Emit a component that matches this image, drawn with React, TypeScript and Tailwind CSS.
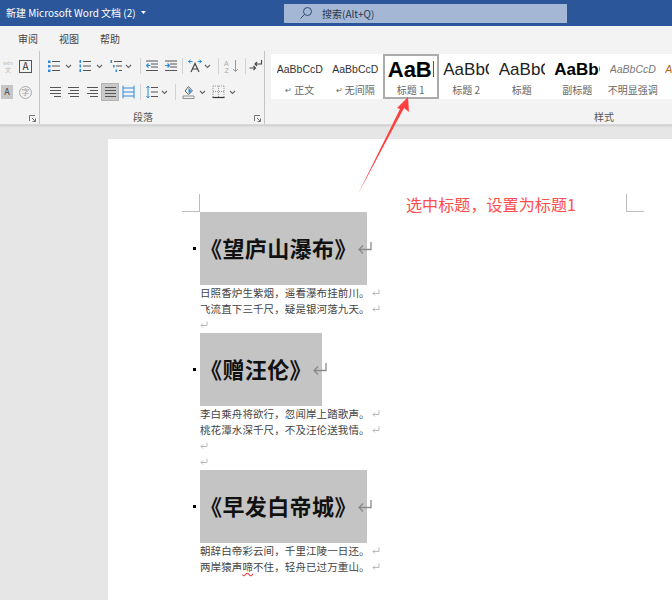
import type { ReactNode } from "react";

const FONT = { fontFamily: '"Noto Sans CJK SC", "Liberation Sans", sans-serif' };

const BLUE = "#2e8bdc";
const INK = "#555";

function Glyph({ w = 14, className = "", children }: { w?: number; className?: string; children: ReactNode }) {
  return (
    <svg width={w} height={14} viewBox={`0 0 ${w} 14`} fill="none" className={`shrink-0 ${className}`} aria-hidden={true}>
      {children}
    </svg>
  );
}

function Chevron({ className = "" }: { className?: string }) {
  return (
    <svg width={7} height={5} viewBox="0 0 7 5" fill="none" className={`shrink-0 ${className}`} aria-hidden={true}>
      <path d="M1 1l2.5 2.5L6 1" stroke="#666" strokeWidth="1.1" />
    </svg>
  );
}

function Sep({ className = "" }: { className?: string }) {
  return <div className={`h-[16px] w-px shrink-0 bg-[#d2d2d2] ${className}`} />;
}

function Launcher({ className = "" }: { className?: string }) {
  return (
    <svg width={7} height={7} viewBox="0 0 7 7" fill="none" className={`shrink-0 ${className}`} aria-hidden={true}>
      <path d="M0.5 6V0.5H6M3 3l3.5 3.5M6.5 3.5v3h-3" stroke="#666" strokeWidth="0.9" />
    </svg>
  );
}

function Lines({ rows, x1 = 1, x2 = 12 }: { rows: [number, number][]; x1?: number; x2?: number }) {
  return (
    <Glyph w={13}>
      {rows.map(([y, inset], i) => (
        <path key={i} d={`M${x1 + inset} ${y}H${x2}`} stroke={INK} strokeWidth="1" />
      ))}
    </Glyph>
  );
}

function Bullets() {
  return (
    <Glyph w={12}>
      {[2.5, 7, 11.5].map((y) => (
        <g key={y}>
          <rect x="0" y={y - 1} width="2.5" height="2.5" fill={BLUE} />
          <path d={`M4 ${y}H12`} stroke={INK} />
        </g>
      ))}
    </Glyph>
  );
}

function Numbered() {
  return (
    <Glyph w={12}>
      {[2.5, 7, 11.5].map((y) => (
        <g key={y}>
          <rect x="0.5" y={y - 1.5} width="1.6" height="3" fill={BLUE} />
          <path d={`M4 ${y}H12`} stroke={INK} />
        </g>
      ))}
    </Glyph>
  );
}

function Multilevel() {
  return (
    <Glyph w={12}>
      <rect x="0.5" y="1" width="1.6" height="3" fill={BLUE} />
      <path d="M4 2.5H12" stroke={INK} />
      <rect x="3" y="6" width="1.6" height="2.5" fill={BLUE} />
      <path d="M6 7H12" stroke={INK} />
      <rect x="5.5" y="10.5" width="1.6" height="2.5" fill={BLUE} />
      <path d="M9 11.5H12" stroke={INK} />
    </Glyph>
  );
}

function Indent({ flip = false }: { flip?: boolean }) {
  return (
    <Glyph w={12}>
      <path d="M0 2H12M5 5H12M5 8H12M0 11.5H12" stroke={INK} />
      <path d={flip ? "M0 6.5H4M2.5 4.5L4.5 6.5L2.5 8.5" : "M0.5 6.5H4.5M2.5 4.5L0.5 6.5L2.5 8.5"} stroke={BLUE} strokeWidth="1.2" />
    </Glyph>
  );
}

function RibbonButtons() {
  return (
    <div className="flex h-[73px] w-[225px] shrink-0 flex-col border-r border-[#c4c4c4]">
      <div className="mt-[8px] flex h-[14px] items-center">
        <div className="ml-[8px]"><Bullets /></div>
        <Chevron className="ml-[5px]" />
        <div className="ml-[7px]"><Numbered /></div>
        <Chevron className="ml-[5px]" />
        <div className="ml-[7px]"><Multilevel /></div>
        <Chevron className="ml-[3px]" />
        <Sep className="ml-[8px]" />
        <div className="ml-[5px]"><Indent /></div>
        <div className="ml-[7px]"><Indent flip={true} /></div>
        <Sep className="ml-[5px]" />
        <Glyph w={14} className="ml-[5px]">
          <path d="M3 13L7 4.5L11 13M4.5 10H9.5" stroke="#444" strokeWidth="1.2" />
          <path d="M0.5 2.5H4.5M2.5 0.8L0.5 2.5L2.5 4.2M13.5 2.5H9.5M11.5 0.8L13.5 2.5L11.5 4.2" stroke={BLUE} />
        </Glyph>
        <Chevron className="ml-[2px]" />
        <Sep className="ml-[7px]" />
        <Glyph w={16} className="ml-[5px]">
          <text x="0" y="6.5" fontSize="7" fill="#aaa" fontFamily="Liberation Sans">A</text>
          <text x="0.5" y="13.5" fontSize="7" fill="#aaa" fontFamily="Liberation Sans">Z</text>
          <path d="M11.5 1V12.5M9 10L11.5 12.5L14 10" stroke="#999" />
        </Glyph>
        <Sep className="ml-[5px]" />
        <Glyph w={14} className="ml-[3px]">
          <path d="M12.5 1V5H6M8 3L6 5L8 7" stroke="#444" strokeWidth="1.1" />
          <path d="M0.5 9H6.5M4.5 7L6.5 9L4.5 11" stroke="#444" strokeWidth="1.1" />
        </Glyph>
      </div>
      <div className="mt-[10px] flex h-[18px] items-center">
        <div className="ml-[9px]"><Lines rows={[[2.5, 0], [5.5, 0], [8.5, 0], [11.5, 4]]} /></div>
        <div className="ml-[5px]"><Lines rows={[[2.5, 0], [5.5, 2], [8.5, 0], [11.5, 2]]} /></div>
        <div className="ml-[6px]"><Lines rows={[[2.5, 0], [5.5, 3], [8.5, 0], [11.5, 3]]} /></div>
        <div className="ml-[2px] flex h-[18px] w-[18px] items-center justify-center border border-[#b4b4b4] bg-[#c9c9c9]">
          <Lines rows={[[2.5, 0], [5.5, 0], [8.5, 0], [11.5, 0]]} />
        </div>
        <Glyph w={13} className="ml-[3px]">
          <path d="M1 0.5V13.5M12 0.5V13.5" stroke={BLUE} />
          <path d="M1 3H12M1 7H12M1 11H12" stroke={BLUE} />
        </Glyph>
        <Sep className="ml-[5px]" />
        <Glyph w={12} className="ml-[5px]">
          <path d="M5 2.5H12M5 7H12M5 11.5H12" stroke={INK} />
          <path d="M2 1V13" stroke={BLUE} />
          <path d="M0.5 3L2 1L3.5 3M0.5 11L2 13L3.5 11" stroke={BLUE} />
        </Glyph>
        <Chevron className="ml-[3px]" />
        <Sep className="ml-[7px]" />
        <Glyph w={13} className="ml-[6px]">
          <path d="M6.5 1.5L10.5 6L6.5 9.5L3 6Z" stroke="#666" />
          <path d="M6.5 3L9.5 6L6.5 8.5Z" fill={BLUE} />
          <path d="M1 11H12V13.5H1Z" fill="#f5f5f5" stroke="#777" strokeWidth="0.8" />
        </Glyph>
        <Chevron className="ml-[4px]" />
        <Glyph w={13} className="ml-[6px]">
          <path d="M1 1H12M1 6.5H12M1 1V12M6.5 1V12M12 1V12" stroke="#999" strokeDasharray="1 1" />
          <path d="M0.5 12.5H12.5" stroke="#333" strokeWidth="1.2" />
        </Glyph>
        <Chevron className="ml-[4px]" />
      </div>
      <div className="relative mt-[7px] flex h-[16px] items-center justify-center text-[10px] text-[#555]">
        <span className="mr-[18px]">段落</span>
        <Launcher className="absolute right-[3px] top-[7px]" />
      </div>
    </div>
  );
}

const STYLES = [
  { sample: "AaBbCcDd", label: "正文", mark: true, cls: "text-[10.5px] text-[#333]" },
  { sample: "AaBbCcDd", label: "无间隔", mark: true, cls: "text-[10.5px] text-[#333]" },
  { sample: "AaBbC", label: "标题 1", cls: "text-[22px] font-bold text-black", on: true },
  { sample: "AaBbC", label: "标题 2", cls: "text-[17px] text-[#222]" },
  { sample: "AaBbC", label: "标题", cls: "text-[17px] text-[#222]" },
  { sample: "AaBbC", label: "副标题", cls: "text-[17px] font-bold text-black" },
  { sample: "AaBbCcDd", label: "不明显强调", cls: "text-[10.5px] italic text-[#777]" },
  { sample: "AaBb", label: "", cls: "text-[10.5px] italic text-[#b5651d]" },
];

function Gallery() {
  return (
    <div className="ml-[6px] flex h-[73px] min-w-0 flex-1 flex-col">
      <div className="mt-[3px] flex h-[45px] bg-white pl-[1px]">
        {STYLES.map((s, i) => (
          <div
            key={i}
            className={`flex h-[45px] w-[55.5px] shrink-0 flex-col items-center overflow-hidden ${s.on ? "border-2 border-[#ababab]" : "border-2 border-transparent"}`}
          >
            <div className="flex h-[27px] w-[46px] items-center overflow-hidden whitespace-nowrap leading-none" style={{ fontFamily: '"Liberation Sans", sans-serif' }}>
              <span className={s.cls}>{s.sample}</span>
            </div>
            <div className="flex h-[13px] items-center whitespace-nowrap text-[10px] text-[#666]">
              {s.mark && <span className="mr-[2px] text-[8px]">↵</span>}
              {s.label}
            </div>
          </div>
        ))}
      </div>
      <div className="mt-[10px] pl-[323px] text-[10px] leading-[16px] text-[#555]">样式</div>
    </div>
  );
}

function ParaMark({ className = "" }: { className?: string }) {
  return (
    <svg width={8} height={8} viewBox="0 0 8 8" fill="none" className={`shrink-0 ${className}`} aria-hidden={true}>
      <path d="M7 0.5V4.5H1M3 2.5L1 4.5L3 6.5" stroke="#aaa" strokeWidth="0.8" />
    </svg>
  );
}

function Heading({ text, width }: { text: string; width: string }) {
  return (
    <div className="relative flex h-[73px] items-center">
      <span className="absolute left-[-7px] top-[35px] h-[3px] w-[3px] bg-black" />
      <div className={`flex h-[73px] items-center whitespace-nowrap bg-[#c4c4c4] pb-[3px] text-[22px] font-bold tracking-[0.4px] text-[#111] ${width}`}>
        {text}
      </div>
      <svg width={14} height={14} viewBox="0 0 14 14" fill="none" className="ml-[-9px] mt-[-2px] shrink-0" aria-hidden={true}>
        <path d="M13 1V8.5H1M5 4.5L1 8.5L5 12.5" stroke="#8a8a8a" strokeWidth="1.3" />
      </svg>
    </div>
  );
}

function Line({ children }: { children?: ReactNode }) {
  return (
    <div className="flex h-[16px] items-center whitespace-nowrap text-[10.5px] tracking-[0.1px] text-[#444]">
      {children}
      <ParaMark className={children ? "ml-[2px]" : ""} />
    </div>
  );
}

export default function App() {
  return (
    <div className="relative h-[600px] w-[672px] overflow-hidden bg-[#e6e6e6]" style={FONT}>
      {/* title bar */}
      <div className="flex h-[26px] items-center bg-[#2b579a] text-white">
        <div className="ml-[6px] flex w-[278px] items-center pb-[1px] text-[10px]">
          <span>新建 Microsoft Word 文档 (2)</span>
          <svg width={5} height={3} viewBox="0 0 5 3" className="ml-[5px]" aria-hidden={true}>
            <path d="M0 0h5L2.5 3z" fill="#fff" />
          </svg>
        </div>
        <div className="flex h-[19px] w-[283px] items-center bg-[#a4b8d5] text-[#333]">
          <svg width={14} height={14} viewBox="0 0 14 14" fill="none" className="ml-[15px]" aria-hidden={true}>
            <circle cx="8.5" cy="5.5" r="4" stroke="#2f4a73" />
            <path d="M5.5 8.5L1.5 12.5" stroke="#2f4a73" />
          </svg>
          <span className="ml-[9px] text-[10px] text-[#26364f]">搜索(Alt+Q)</span>
        </div>
      </div>

      {/* tabs */}
      <div className="flex h-[25px] items-center gap-[21px] bg-[#f3f3f3] pl-[18px] text-[10px] text-[#444]">
        <span>审阅</span>
        <span>视图</span>
        <span>帮助</span>
      </div>

      {/* ribbon */}
      <div className="flex h-[74px] items-start border-b border-[#d9d9d9] bg-[#f3f3f3] shadow-[0_1px_2px_rgba(0,0,0,0.12)]">
        <div className="flex h-[73px] w-[40px] shrink-0 flex-col border-r border-[#c4c4c4]">
          <div className="mt-[8px] flex h-[14px] items-center">
            <div className="ml-[1px] flex w-[14px] flex-col items-center text-[5px] leading-[7px] text-[#bbb]">
              <span>wén</span>
              <span className="text-[6px]">文</span>
            </div>
            <div className="ml-[4px] flex h-[13px] w-[13px] items-center justify-center border border-[#555] text-[10px] leading-none text-[#333]">A</div>
          </div>
          <div className="mt-[10px] flex h-[18px] items-center">
            <div className="ml-[1px] flex h-[14px] w-[12px] items-center justify-center bg-[#c6c6c6] text-[9px] text-[#444]">A</div>
            <div className="ml-[6px] flex h-[13px] w-[13px] items-center justify-center rounded-full border border-[#aaa] text-[8px] leading-none text-[#999]">字</div>
          </div>
          <div className="mt-[14px] flex justify-end pr-[3px]">
            <Launcher />
          </div>
        </div>
        <RibbonButtons />
        <Gallery />
      </div>

      {/* page */}
      <div className="ml-[108px] mt-[14px] h-[461px] bg-white pl-[92px] pt-[73px]">
        <Heading text="《望庐山瀑布》" width="w-[167px]" />
        <Line>日照香炉生紫烟，遥看瀑布挂前川。</Line>
        <Line>飞流直下三千尺，疑是银河落九天。</Line>
        <Line />
        <Heading text="《赠汪伦》" width="w-[122px]" />
        <Line>李白乘舟将欲行，忽闻岸上踏歌声。</Line>
        <Line>桃花潭水深千尺，不及汪伦送我情。</Line>
        <Line />
        <Line />
        <Heading text="《早发白帝城》" width="w-[167px]" />
        <Line>朝辞白帝彩云间，千里江陵一日还。</Line>
        <Line>
          <span>
            两岸猿声<span className="underline decoration-red-500 decoration-wavy">啼</span>不住，轻舟已过万重山。
          </span>
        </Line>
      </div>

      {/* page corner marks */}
      <div className="absolute left-[182px] top-[194px] h-[18px] w-[18px] border-b border-r border-[#bdbdbd]" />
      <div className="absolute left-[626px] top-[194px] h-[18px] w-[18px] border-b border-l border-[#bdbdbd]" />

      {/* annotation */}
      <svg width={672} height={600} viewBox="0 0 672 600" className="pointer-events-none absolute left-0 top-0" aria-hidden={true}>
        <polygon points="358,194 400,109 397,108 408,97 409,112 404,108" fill="#ff4040" />
      </svg>
      <div className="absolute left-[406px] top-[192px] whitespace-nowrap text-[16px] leading-[24px] tracking-[0.1px] text-[#ff4d4d]">
        选中标题，设置为标题1
      </div>
    </div>
  );
}
